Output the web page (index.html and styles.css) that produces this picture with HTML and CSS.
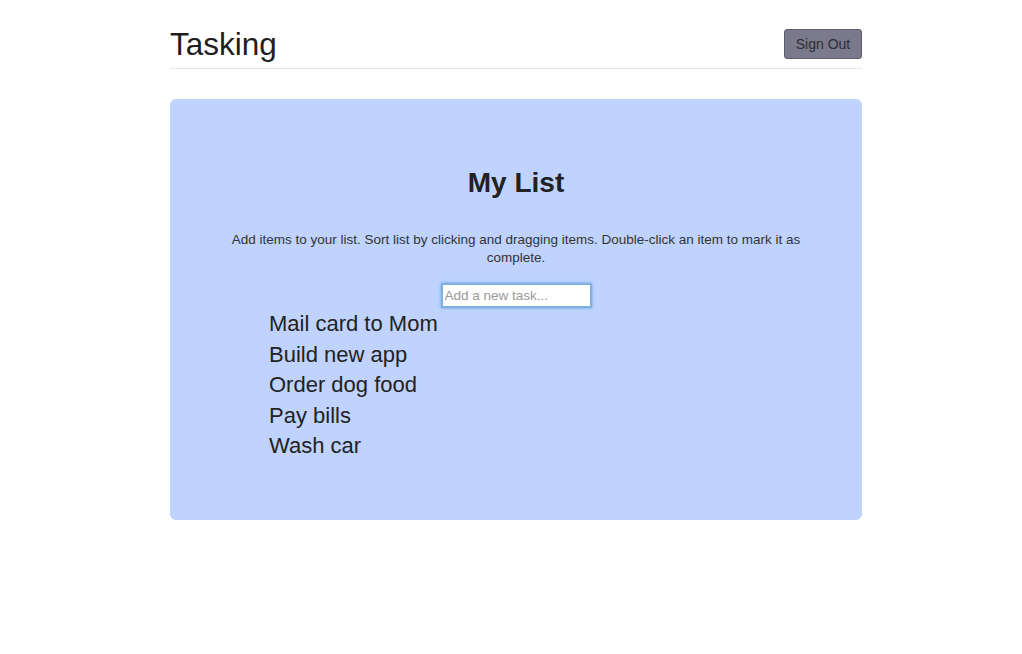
FILE: index.html
```html
<!DOCTYPE html>
<html>
<head>
<meta charset="utf-8">
<link rel="stylesheet" href="styles.css">
</head>
<body>
<div class="container">
  <header class="header">
    <h3 class="brand">Tasking</h3>
    <button class="btn-signout">Sign Out</button>
  </header>
  <section class="jumbotron">
    <h2 class="title">My List</h2>
    <p class="lead">Add items to your list. Sort list by clicking and dragging items. Double-click an item to mark it as complete.</p>
    <div class="input-row">
      <input class="task-input" type="text" placeholder="Add a new task...">
    </div>
    <ul class="tasks">
      <li>Mail card to Mom</li>
      <li>Build new app</li>
      <li>Order dog food</li>
      <li>Pay bills</li>
      <li>Wash car</li>
    </ul>
  </section>
</div>
</body>
</html>
```
FILE: styles.css
```css
* { box-sizing: border-box; }
html, body { margin: 0; padding: 0; background: #fff; }
body {
  font-family: "Liberation Sans", Arial, Helvetica, sans-serif;
  color: #222;
  padding-left: 10px;
}
.container {
  width: 692px;
  margin: 0 auto;
}
.header {
  display: flex;
  justify-content: space-between;
  align-items: center;
  height: 69px;
  padding-top: 26px;
  padding-bottom: 6px;
  border-bottom: 1px solid #e5e5e5;
}
.brand {
  margin: 0;
  font-size: 31.5px;
  font-weight: normal;
  line-height: 36px;
  color: #1e1e1e;
}
.btn-signout {
  width: 78px;
  height: 30px;
  background: #7a7a8c;
  border: 1px solid #5d5d6c;
  border-radius: 3px;
  font-family: "Liberation Sans", Arial, sans-serif;
  font-size: 14px;
  color: #2d2d33;
  padding: 0;
}
.jumbotron {
  margin-top: 30px;
  background: #bfd3fe;
  border-radius: 6px;
  padding: 67px 60px 58px;
  height: 421px;
}
.title {
  margin: 0;
  text-align: center;
  font-size: 28px;
  font-weight: bold;
  line-height: 34px;
  color: #222;
}
.lead {
  margin: 31px 0 0;
  text-align: center;
  font-size: 13.5px;
  line-height: 18px;
  color: #333;
}
.input-row {
  display: flex;
  justify-content: center;
  margin-top: 16px;
}
.task-input {
  width: 151px;
  height: 25px;
  border: 2px solid #7fb0df;
  box-shadow: 0 0 3px #68a6e0;
  font-family: "Liberation Sans", Arial, sans-serif;
  font-size: 13.5px;
  padding: 0 2px;
  outline: none;
  background: #fff;
}
.task-input::placeholder { color: #999; }
.tasks {
  margin: 1px 0 0;
  padding-left: 39px;
  list-style: none;
}
.tasks li {
  font-size: 22px;
  line-height: 30.5px;
  color: #222;
}
```
